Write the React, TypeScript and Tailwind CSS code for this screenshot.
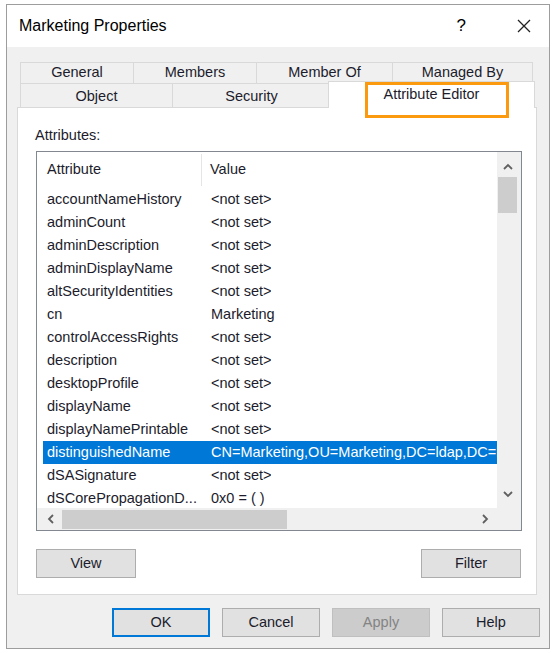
const ROWS: [string, string][] = [
  ["accountNameHistory", "<not set>"],
  ["adminCount", "<not set>"],
  ["adminDescription", "<not set>"],
  ["adminDisplayName", "<not set>"],
  ["altSecurityIdentities", "<not set>"],
  ["cn", "Marketing"],
  ["controlAccessRights", "<not set>"],
  ["description", "<not set>"],
  ["desktopProfile", "<not set>"],
  ["displayName", "<not set>"],
  ["displayNamePrintable", "<not set>"],
  ["distinguishedName", "CN=Marketing,OU=Marketing,DC=ldap,DC=local"],
  ["dSASignature", "<not set>"],
  ["dSCorePropagationD...", "0x0 = ( )"],
];

const SELECTED = "distinguishedName";

function Chevron({ dir }: { dir: "up" | "down" | "left" | "right" }) {
  const paths = {
    up: "M1 6 L5 2 L9 6",
    down: "M1 2 L5 6 L9 2",
    left: "M6 1 L2 5 L6 9",
    right: "M2 1 L6 5 L2 9",
  };
  const vertical = dir === "up" || dir === "down";
  return (
    <svg
      width={vertical ? 10 : 8}
      height={vertical ? 8 : 10}
      viewBox={vertical ? "0 0 10 8" : "0 0 8 10"}
      fill="none"
      stroke="#606060"
      strokeWidth={1.8}
    >
      <path d={paths[dir]} />
    </svg>
  );
}

function Tab({ label, width, last }: { label: string; width: string; last?: boolean }) {
  return (
    <div
      className={`${width} h-full flex items-center justify-center bg-[#f0f0f0] border-t border-l border-[#d9d9d9] ${
        last ? "border-r" : ""
      }`}
    >
      {label}
    </div>
  );
}

function DialogButton({
  label,
  primary,
  disabled,
}: {
  label: string;
  primary?: boolean;
  disabled?: boolean;
}) {
  const tone = disabled
    ? "bg-[#cccccc] border border-[#bfbfbf] text-[#838383]"
    : primary
      ? "bg-[#e1e1e1] border-2 border-[#0078d7]"
      : "bg-[#e1e1e1] border border-[#adadad]";
  return (
    <button className={`w-[98px] h-[29px] flex items-center justify-center ${tone}`}>{label}</button>
  );
}

function AttributeList() {
  return (
    <div className="w-[486px] h-[380px] border border-[#828790] bg-white flex flex-col">
      <div className="flex h-[356px]">
        <div className="w-[460px] overflow-hidden">
          <div className="h-[36px] flex items-center">
            <div className="w-[165px] pl-[10px] h-[32px] flex items-center border-r border-[#e5e5e5]">
              Attribute
            </div>
            <div className="pl-[8px]">Value</div>
          </div>
          {ROWS.map(([name, value]) => {
            const selected = name === SELECTED;
            return (
              <div key={name} className="h-[23px] pl-[6px] flex">
                <div
                  className={`flex flex-1 min-w-0 items-center ${
                    selected ? "bg-[#0078d7] text-white" : ""
                  }`}
                >
                  <div className="w-[159px] shrink-0 pl-[4px] whitespace-nowrap overflow-hidden">
                    {name}
                  </div>
                  <div className="pl-[9px] whitespace-nowrap overflow-hidden">{value}</div>
                </div>
              </div>
            );
          })}
        </div>
        <div className="w-[24px] bg-[#f0f0f0] flex flex-col">
          <div className="h-[25px] flex items-center justify-center pr-[3px] pt-[4px]">
            <Chevron dir="up" />
          </div>
          <div className="ml-[1px] w-[19px] h-[36px] bg-[#cdcdcd]" />
          <div className="flex-1" />
          <div className="h-[25px] flex items-center justify-center pr-[3px] pb-[4px]">
            <Chevron dir="down" />
          </div>
        </div>
      </div>
      <div className="flex h-[22px]">
        <div className="w-[460px] bg-[#f0f0f0] flex items-center">
          <div className="w-[25px] h-full flex items-center justify-center pl-[2px]">
            <Chevron dir="left" />
          </div>
          <div className="w-[225px] h-[19px] bg-[#cdcdcd]" />
          <div className="flex-1" />
          <div className="w-[25px] h-full flex items-center justify-center">
            <Chevron dir="right" />
          </div>
        </div>
        <div className="w-[24px] bg-[#f0f0f0]" />
      </div>
    </div>
  );
}

export default function App() {
  return (
    <div className="w-[556px] h-[653px] bg-white pl-[6px] pt-[4px] font-['Liberation_Sans',sans-serif] text-[14.5px] text-[#1c1c2c]">
      <div className="relative w-[544px] h-[645px] border border-[#9d9d9d] bg-[#f0f0f0] flex flex-col">
        <div className="h-[42px] bg-white flex items-center pl-[12px] shrink-0">
          <span className="text-[16px] text-black">Marketing Properties</span>
          <span className="ml-auto mr-[50px] text-[17px] text-black">?</span>
          <svg width="16" height="16" viewBox="0 0 16 16" className="mr-[17px]" stroke="#222" strokeWidth={1.3}>
            <path d="M2 2 L14 14 M14 2 L2 14" />
          </svg>
        </div>

        <div className="pl-[10px] pt-[13px]">
          <div className="pl-[3px] h-[23px] flex pt-[2px]">
            <Tab label="General" width="w-[113px]" />
            <Tab label="Members" width="w-[123px]" />
            <Tab label="Member Of" width="w-[136px]" />
            <Tab label="Managed By" width="w-[141px]" last />
          </div>
          <div className="pl-[3px] h-[24px] flex items-end">
            <div className="w-[152px] h-full pt-[3px] flex items-center justify-center bg-[#f0f0f0] border-t border-l border-[#d9d9d9]">
              Object
            </div>
            <div className="w-[158px] h-full pt-[3px] flex items-center justify-center bg-[#f0f0f0] border-t border-l border-[#d9d9d9]">
              Security
            </div>
            <div className="relative z-10 w-[207px] h-[27px] -ml-[2px] -mb-px pb-[1px] flex items-center justify-center bg-white border-t border-x border-[#d9d9d9]">
              Attribute Editor
            </div>
          </div>
          <div className="w-[520px] h-[488px] border border-[#d9d9d9] bg-white pl-[18px] flex flex-col">
            <div className="mt-[17px] h-[20px] leading-[20px] -ml-[1px]">Attributes:</div>
            <div className="mt-[6px]">
              <AttributeList />
            </div>
            <div className="mt-[18px] w-[485px] flex justify-between">
              <button className="w-[100px] h-[29px] bg-[#e1e1e1] border border-[#adadad]">View</button>
              <button className="w-[100px] h-[29px] bg-[#e1e1e1] border border-[#adadad]">Filter</button>
            </div>
          </div>
        </div>

        <div className="mt-[13px] pr-[9px] flex justify-end gap-[12px]">
          <DialogButton label="OK" primary />
          <DialogButton label="Cancel" />
          <DialogButton label="Apply" disabled />
          <DialogButton label="Help" />
        </div>

        <div className="absolute left-[358px] top-[77px] w-[144px] h-[36px] border-[3px] border-[#fb9a0e] z-20" />
      </div>
    </div>
  );
}
